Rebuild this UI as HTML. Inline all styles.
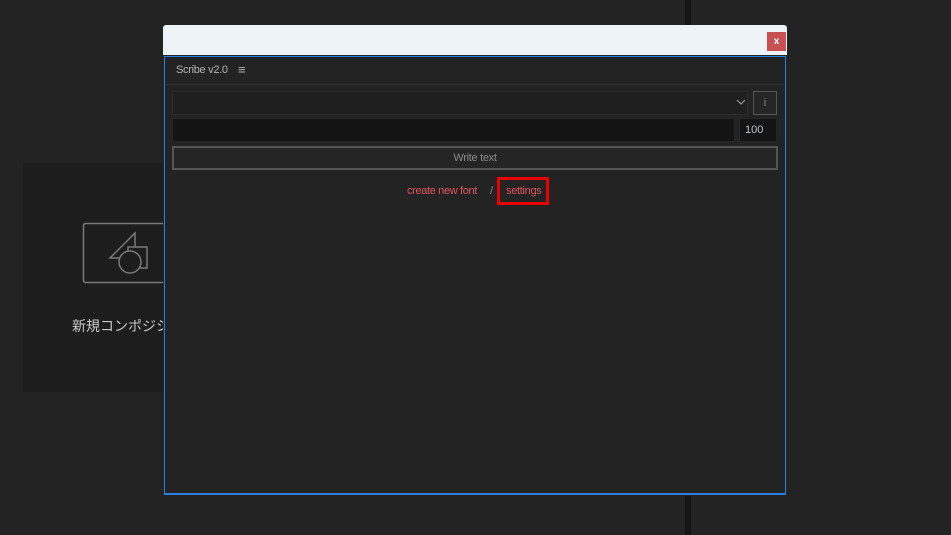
<!DOCTYPE html>
<html><head><meta charset="utf-8"><style>
*{margin:0;padding:0;box-sizing:border-box}
body{width:951px;height:535px;background:#232323;position:relative;overflow:hidden;font-family:"Liberation Sans","Noto Sans CJK JP",sans-serif}
.a{position:absolute}
</style></head><body>
<div class="a" style="left:685px;top:0;width:6px;height:535px;background:#161616"></div>
<div class="a" style="left:23px;top:163px;width:145px;height:229px;background:#1d1d1d"></div>
<svg class="a" style="left:0;top:0" width="170" height="400">
<rect x="83.5" y="223.5" width="100" height="59" rx="2" fill="none" stroke="#7a7a7a" stroke-width="1.5"/>
<path d="M135 233 L110 258 L135 258 Z" fill="none" stroke="#7a7a7a" stroke-width="1.5"/>
<rect x="128" y="247" width="19" height="21" fill="#1d1d1d" stroke="#7a7a7a" stroke-width="1.5"/>
<circle cx="130" cy="262" r="11" fill="#1d1d1d" stroke="#7a7a7a" stroke-width="1.5"/>
</svg>
<div class="a" style="left:72px;top:316px;font-size:14px;color:#c8c8c8;white-space:nowrap">新規コンポジション</div>
<div class="a" style="left:163px;top:25px;width:624px;height:471px;background:#232323;border-radius:3px 3px 0 0;overflow:hidden">
 <div class="a" style="left:0;top:0;width:624px;height:30px;background:#eef3f8"></div>
 <div class="a" style="left:604px;top:7px;width:19px;height:19px;background:#c85050;color:#fff;font-size:10px;font-weight:bold;text-align:center;line-height:19px">x</div>
 <div class="a" style="left:1px;top:31px;width:622px;height:439px;border:2px solid #2a7fe0;border-width:1.5px 1.5px 2px 1.5px"></div>
</div>
<div class="a" style="left:176px;top:64px;font-size:11px;color:#b4b4b4;letter-spacing:-0.3px">Scribe v2.0</div>
<div class="a" style="left:238px;top:62px;font-size:13px;color:#b4b4b4">≡</div>
<div class="a" style="left:166px;top:84px;width:618px;height:1px;background:#303030"></div>
<div class="a" style="left:172px;top:91px;width:576px;height:24px;background:#1f1f1f;border:1px solid #2c2c2c"></div>
<svg class="a" style="left:736px;top:99px" width="10" height="7"><path d="M1 1 L5 5 L9 1" fill="none" stroke="#999" stroke-width="1.2"/></svg>
<div class="a" style="left:753px;top:91px;width:24px;height:24px;background:#262626;border:1px solid #555;color:#888;font-size:11px;text-align:center;line-height:22px">i</div>
<div class="a" style="left:172px;top:118px;width:563px;height:24px;background:#141414;border:1px solid #262626"></div>
<div class="a" style="left:739px;top:118px;width:38px;height:24px;background:#141414;border:1px solid #262626;color:#b8c4d0;font-size:11px;padding-left:5px;line-height:23px">100</div>
<div class="a" style="left:172px;top:146px;width:606px;height:24px;background:#252525;border:2px solid #555;color:#8a8a8a;font-size:11px;text-align:center;line-height:21px;letter-spacing:-0.3px">Write text</div>
<div class="a" style="left:407px;top:185px;font-size:11px;color:#e0555d;letter-spacing:-0.35px">create new font</div>
<div class="a" style="left:490px;top:185px;font-size:11px;color:#888">/</div>
<div class="a" style="left:497px;top:177px;width:52px;height:28px;border:3px solid #e60000"></div>
<div class="a" style="left:506px;top:185px;font-size:11px;color:#e0555d;letter-spacing:-0.3px">settings</div>
</body></html>
